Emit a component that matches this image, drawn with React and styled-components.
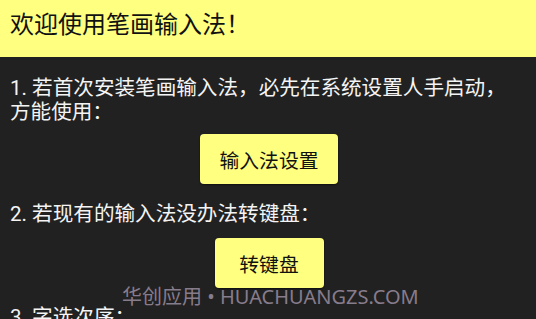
import React from 'react'
import styled, { createGlobalStyle } from 'styled-components'

const GlobalStyle = createGlobalStyle`
  html, body {
    margin: 0;
    padding: 0;
    background: #212121;
    overflow: hidden;
  }
  body {
    font-family: Roboto, "Noto Sans CJK SC", sans-serif;
  }
`

const Screen = styled.div`
  position: relative;
  width: 536px;
  height: 319px;
  overflow: hidden;
  background: #212121;
  color: #f4f4f4;
`

const Header = styled.header`
  height: 57px;
  box-sizing: border-box;
  background: #ffff80;
  padding: 9px 10px 0;
  display: flex;
  align-items: flex-start;
`

const Title = styled.h1`
  margin: 0;
  font-size: 24px;
  font-weight: 400;
  line-height: 32px;
  color: #111;
`

const Content = styled.main`
  padding: 0 10px;
  display: flex;
  flex-direction: column;
`

const Step = styled.p`
  margin: ${p => p.$top}px 0 0;
  font-size: 20.6px;
  line-height: 24px;
  white-space: nowrap;
`

const ButtonRow = styled.div`
  display: flex;
  justify-content: center;
  margin-top: ${p => p.$top}px;
  padding-left: 2px;
`

const Button = styled.button`
  min-width: 109px;
  height: 50px;
  padding: 0 20px;
  border: none;
  border-radius: 4px;
  background: #ffff80;
  color: #111;
  font-family: Roboto, "Noto Sans CJK SC", sans-serif;
  font-size: 19.8px;
  box-shadow: 0 1px 2px rgba(0, 0, 0, 0.5);
`

const Watermark = styled.div`
  position: absolute;
  left: 122px;
  top: 285px;
  font-family: "Noto Sans", "Noto Sans CJK SC", sans-serif;
  font-size: 20px;
  line-height: 24px;
  color: #877c8c;
  white-space: nowrap;
`

export default function App() {
  return (
    <Screen>
      <GlobalStyle />
      <Header>
        <Title>欢迎使用笔画输入法！</Title>
      </Header>
      <Content>
        <Step $top={19}>
          1. 若首次安装笔画输入法，必先在系统设置人手启动，<br />方能使用：
        </Step>
        <ButtonRow $top={10}>
          <Button>输入法设置</Button>
        </ButtonRow>
        <Step $top={18}>2. 若现有的输入法没办法转键盘：</Step>
        <ButtonRow $top={12}>
          <Button>转键盘</Button>
        </ButtonRow>
        <Step $top={17}>3. 字选次序：</Step>
      </Content>
      <Watermark>华创应用 • HUACHUANGZS.COM</Watermark>
    </Screen>
  )
}
